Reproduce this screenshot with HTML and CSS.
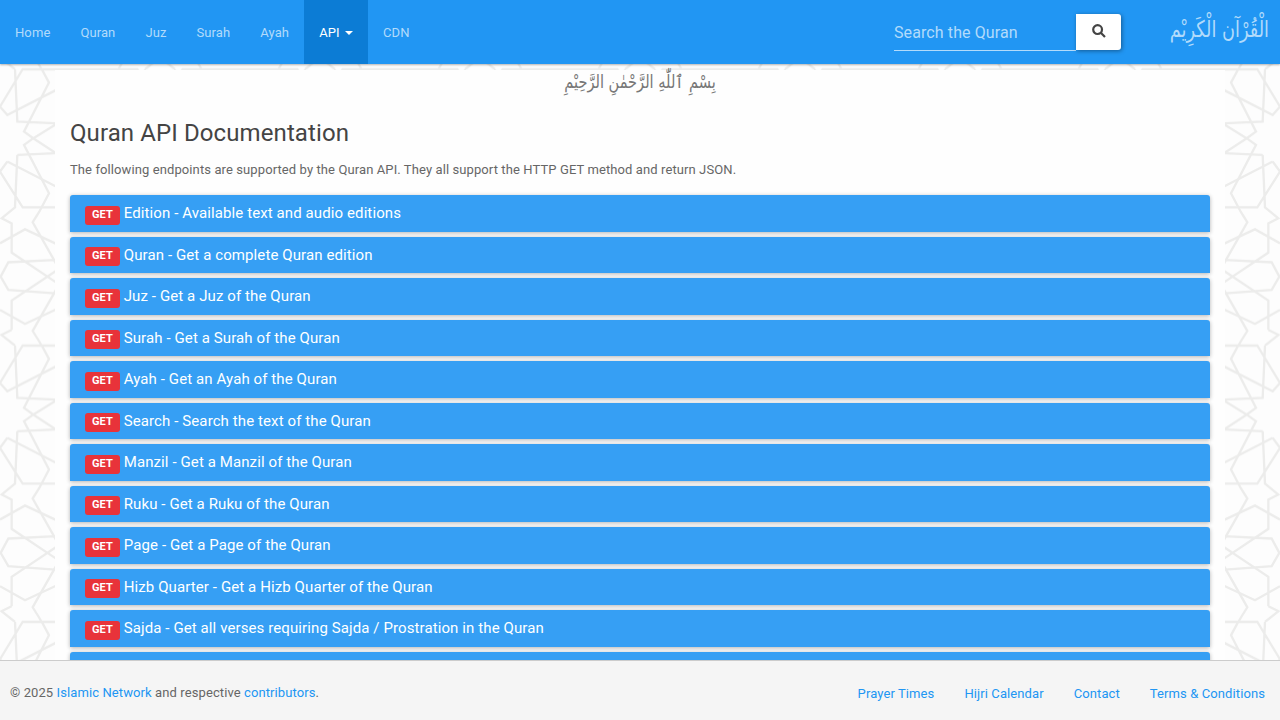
FILE: index.html
```html
<!DOCTYPE html>
<html lang="en">
<head>
    <meta charset="UTF-8">
    <meta name="viewport" content="width=device-width, initial-scale=1.0">
    <title>Quran API Documentation</title>
    <link rel="stylesheet" href="styles.css">
</head>
<body>
    <svg class="backdrop" width="1280" height="720">
        <defs>
            <!-- half of the tile, the other half is its mirror image -->
            <g id="half" transform="scale(.3333)">
                <path d="M240 0H68L0 112L22 137L165 64L240 26M45 0L52 157L165 162L240 166M118 -14L147 40L72 187L100 207L165 250L240 294M240 120L165 167L100 207L72 227L147 372L118 427L98 459L165 577L190 622L165 667L98 785L118 817L147 869"/>
                <path d="M52 257L165 252L240 248M22 277L165 350L240 388M22 277L0 307L68 414H240M52 257L45 414L5 447L35 462V550L165 637L240 686M0 522L75 480L165 522L240 558M240 576L165 572L25 579L2 622L25 662L165 672L240 678M35 782V694L165 607L240 558M0 722L75 764L165 722L240 686M35 782L5 797L45 829M50 857L68 829H240"/>
            </g>
            <pattern id="lattice" y="69.3" width="160" height="276.3" patternUnits="userSpaceOnUse">
                <use href="#half"/>
                <use href="#half" transform="translate(160 0) scale(-1 1)"/>
            </pattern>
        </defs>
        <rect width="1280" height="720" fill="url(#lattice)"/>
    </svg>

    <nav class="navbar">
        <ul class="nav">
            <li><a href="#">Home</a></li>
            <li><a href="#">Quran</a></li>
            <li><a href="#">Juz</a></li>
            <li><a href="#">Surah</a></li>
            <li><a href="#">Ayah</a></li>
            <li class="active"><a href="#">API <b class="caret"></b></a></li>
            <li><a href="#">CDN</a></li>
        </ul>
        <form class="search">
            <input type="text" placeholder="Search the Quran">
            <button type="submit" aria-label="Search">
                <svg width="14" height="14" viewBox="0 0 14 14"><circle cx="5.6" cy="5.6" r="4.4"/><path d="M8.8 8.8L13 13"/></svg>
            </button>
        </form>
        <a class="brand" href="#" lang="ar" dir="rtl">الْقُرْآن الْكَرِيْم</a>
    </nav>

    <main class="container">
        <div class="bismillah" lang="ar" dir="rtl">بِسْمِ ٱللّٰهِ الرَّحْمٰنِ الرَّحِيْمِ</div>
        <h1>Quran API Documentation</h1>
        <p>The following endpoints are supported by the Quran API. They all support the HTTP GET method and return JSON.</p>
        <div class="panel-group">
            <a class="panel" href="#"><span class="label">GET</span> Edition - Available text and audio editions</a>
            <a class="panel" href="#"><span class="label">GET</span> Quran - Get a complete Quran edition</a>
            <a class="panel" href="#"><span class="label">GET</span> Juz - Get a Juz of the Quran</a>
            <a class="panel" href="#"><span class="label">GET</span> Surah - Get a Surah of the Quran</a>
            <a class="panel" href="#"><span class="label">GET</span> Ayah - Get an Ayah of the Quran</a>
            <a class="panel" href="#"><span class="label">GET</span> Search - Search the text of the Quran</a>
            <a class="panel" href="#"><span class="label">GET</span> Manzil - Get a Manzil of the Quran</a>
            <a class="panel" href="#"><span class="label">GET</span> Ruku - Get a Ruku of the Quran</a>
            <a class="panel" href="#"><span class="label">GET</span> Page - Get a Page of the Quran</a>
            <a class="panel" href="#"><span class="label">GET</span> Hizb Quarter - Get a Hizb Quarter of the Quran</a>
            <a class="panel" href="#"><span class="label">GET</span> Sajda - Get all verses requiring Sajda / Prostration in the Quran</a>
            <div class="panel"></div>
        </div>
    </main>

    <footer class="footer">
        <div>© 2025 <a href="#">Islamic Network</a> and respective <a href="#">contributors</a>.</div>
        <div class="footer-links">
            <a href="#">Prayer Times</a>
            <a href="#">Hijri Calendar</a>
            <a href="#">Contact</a>
            <a href="#">Terms &amp; Conditions</a>
        </div>
    </footer>
</body>
</html>
```
FILE: styles.css
```css
* {
    box-sizing: border-box;
}

body {
    display: flex;
    flex-direction: column;
    height: 720px;
    margin: 0;
    overflow: hidden;
    background: #fdfdfd;
    color: #666;
    font-family: Roboto, sans-serif;
    font-size: 13px;
    line-height: 24px;
    letter-spacing: .1px;
}

a {
    color: #2196f3;
    text-decoration: none;
}

.backdrop {
    position: absolute;
    top: 0;
    left: 0;
    z-index: -1;
    fill: none;
    stroke: #ececeb;
    stroke-width: 7;
}

.backdrop rect {
    stroke: none;
}

.navbar {
    display: flex;
    flex: none;
    height: 64px;
    background: #2196f3;
    box-shadow: 0 1px 2px rgba(0, 0, 0, .3);
}

.nav {
    display: flex;
    margin: 0;
    padding: 0;
    list-style: none;
}

.nav a {
    display: block;
    height: 64px;
    padding: 21px 15px;
    color: #b2dbfb;
}

.nav .active a {
    background: #0c7cd5;
    color: #fff;
}

.caret {
    display: inline-block;
    margin: 0 0 2px 2px;
    vertical-align: middle;
    border-top: 4px solid;
    border-left: 4px solid transparent;
    border-right: 4px solid transparent;
}

.search {
    display: flex;
    margin: 14px 0 0 auto;
}

.search input {
    width: 182px;
    height: 37px;
    padding: 0;
    border: 0;
    border-bottom: 1px solid #b2dbfb;
    background: none;
    font: 16px Roboto, sans-serif;
    letter-spacing: .1px;
}

.search input::placeholder {
    color: #b2dbfb;
    opacity: 1;
}

.search button {
    width: 45px;
    height: 36px;
    padding: 0;
    border: 0;
    border-radius: 0 3px 3px 0;
    background: #fff;
    box-shadow: 1px 1px 4px rgba(0, 0, 0, .4);
}

.search svg {
    display: block;
    margin: -2px auto 0;
    fill: none;
    stroke: #444;
    stroke-width: 2.2;
}

.brand {
    width: 148px;
    margin-right: 11px;
    padding-top: 17px;
    color: #b2dbfb;
    font-family: "DejaVu Sans", sans-serif;
    font-size: 23px;
    white-space: nowrap;
    transform: scaleX(.77);
    transform-origin: right;
}

.container {
    flex: 1;
    width: 1170px;
    min-height: 0;
    margin: 6px auto 0;
    padding: 0 15px;
    background: #fefefe;
}

.bismillah {
    height: 50px;
    text-align: center;
    color: #777;
    font-family: "DejaVu Sans", sans-serif;
    font-size: 18px;
    transform: scaleX(.81);
}

h1 {
    margin: 0 0 11px;
    color: #444;
    font-size: 24px;
    font-weight: 400;
    line-height: 27px;
}

p {
    margin: 0 0 13px;
}

.panel {
    display: block;
    height: 36.5px;
    margin-bottom: 5px;
    padding: 10px 15px;
    border-radius: 3px 3px 0 0;
    background: #369ff4;
    box-shadow: 0 1px 4px rgba(0, 0, 0, .3);
    color: #fff;
    font-size: 15px;
    line-height: 16.5px;
}

.label {
    display: inline-block;
    height: 19px;
    padding: 0 7px;
    border-radius: 3px;
    background: #e8333a;
    font-size: 11px;
    font-weight: 700;
    line-height: 18px;
    vertical-align: .3px;
}

.footer {
    position: relative;
    display: flex;
    flex: none;
    justify-content: space-between;
    height: 60px;
    padding: 20px 15px 0 10px;
    border-top: 1px solid #ccc;
    background: #f5f5f5;
}

.footer-links {
    display: flex;
    gap: 30px;
    padding-top: 1px;
}
```
